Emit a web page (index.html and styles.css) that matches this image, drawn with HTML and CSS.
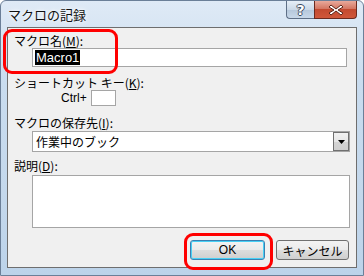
FILE: index.html
```html
<!DOCTYPE html>
<html lang="ja">
<head>
  <meta charset="UTF-8">
  <title>マクロの記録</title>
  <link rel="stylesheet" href="styles.css">
</head>
<body>
  <div class="window">
    <div class="titlebar">
      <span class="title">マクロの記録</span>
      <div class="caption-buttons">
        <div class="cap-btn help-btn">?</div>
        <div class="cap-btn close-btn">
          <svg width="16" height="12" viewBox="0 0 16 12">
            <path d="M3 1 L8 5 L13 1 L15 3 L10 6 L15 9 L13 11 L8 7 L3 11 L1 9 L6 6 L1 3 Z" fill="#fff" stroke="#5a2418" stroke-width="1" stroke-linejoin="round"/>
          </svg>
        </div>
      </div>
    </div>

    <div class="client">
      <div class="label first">マクロ名(<u>M</u>):</div>
      <div class="field text-field"><span class="selected">Macro1</span></div>

      <div class="label gap-9">ショートカット キー(<u>K</u>):</div>
      <div class="shortcut-row">
        <span class="ctrl-label">Ctrl+</span>
        <div class="key-box"></div>
      </div>

      <div class="label gap-10">マクロの保存先(<u>I</u>):</div>
      <div class="field select-field">
        <span class="select-text">作業中のブック</span>
        <div class="drop-btn">
          <svg width="7" height="4" viewBox="0 0 7 4"><path d="M0 0 H7 L3.5 4 Z" fill="#000"/></svg>
        </div>
      </div>

      <div class="label gap-7">説明(<u>D</u>):</div>
      <div class="field text-area"></div>

      <div class="buttons">
        <div class="btn ok-btn">OK</div>
        <div class="btn">キャンセル</div>
      </div>

      <div class="highlight hl-name"></div>
      <div class="highlight hl-ok"></div>
    </div>
  </div>
</body>
</html>
```

FILE: styles.css
```css
* {
  margin: 0;
  padding: 0;
  box-sizing: border-box;
}

body {
  width: 364px;
  height: 276px;
  overflow: hidden;
  font-family: "Noto Sans CJK JP", "DejaVu Sans", sans-serif;
  font-size: 12px;
  color: #000;
  background: #fff;
}

.window {
  width: 364px;
  height: 276px;
  background: linear-gradient(180deg, #dfeaf6 0%, #c9dcef 30%, #c4d8ec 70%, #bcd3ea 100%);
  border: 1px solid #6b7f98;
  border-radius: 6px 6px 0 0;
  display: flex;
  flex-direction: column;
  position: relative;
}

.titlebar {
  height: 26px;
  display: flex;
  align-items: flex-start;
  justify-content: space-between;
  padding-left: 7px;
}

.title {
  font-size: 13px;
  line-height: 13px;
  margin-top: 7px;
  color: #111;
  text-shadow: 0 0 6px #fff, 0 0 3px #fff;
}

.caption-buttons {
  display: flex;
  margin-right: 6px;
}

.cap-btn {
  height: 18px;
  border: 1px solid #5e6f86;
  border-top: none;
  display: flex;
  align-items: center;
  justify-content: center;
}

.help-btn {
  width: 28px;
  border-radius: 0 0 0 4px;
  border-right: none;
  background: linear-gradient(180deg, #e6eef7 0%, #cbd9e8 50%, #b5c7db 51%, #c8d8e9 100%);
  color: #fff;
  font-family: "DejaVu Sans", sans-serif;
  font-weight: bold;
  font-size: 14px;
  text-shadow: 1px 0 0 #3b4a5e, -1px 0 0 #3b4a5e, 0 1px 0 #3b4a5e, 0 -1px 0 #3b4a5e;
}

.close-btn {
  width: 43px;
  border-radius: 0 0 4px 0;
  border-color: #6b2a1f;
  background: linear-gradient(180deg, #e9a99b 0%, #d47763 45%, #c34a30 50%, #d0573a 100%);
}

.client {
  margin: 0 6px;
  height: 241px;
  background: #f0f0f0;
  border: 1px solid #6e6e6e;
  padding: 6px 6px 0 6px;
  display: flex;
  flex-direction: column;
  position: relative;
}

.label {
  line-height: 14px;
  height: 14px;
  white-space: nowrap;
}

.label u {
  text-underline-offset: 1px;
}

.gap-9 { margin-top: 9px; }
.gap-10 { margin-top: 10px; }
.gap-7 { margin-top: 7px; }

.field {
  margin-left: 18px;
  background: #fff;
  border: 1px solid #a5a5a5;
}

.text-field {
  width: 315px;
  height: 19px;
  display: flex;
  align-items: center;
  padding-left: 2px;
}

.selected {
  background: #000;
  color: #fff;
  font-family: "Liberation Sans", sans-serif;
  font-size: 13px;
  line-height: 15px;
  padding: 0 1px;
}

.shortcut-row {
  display: flex;
  align-items: center;
  margin-left: 47px;
  gap: 4px;
}

.ctrl-label {
  font-family: "Liberation Sans", sans-serif;
  font-size: 12px;
}

.key-box {
  width: 25px;
  height: 16px;
  background: #fff;
  border: 1px solid #a5a5a5;
}

.select-field {
  width: 318px;
  height: 21px;
  display: flex;
  align-items: center;
  justify-content: space-between;
  margin-top: 1px;
}

.select-text {
  padding-left: 3px;
  font-size: 12px;
}

.drop-btn {
  width: 16px;
  height: 19px;
  border: 1px solid #707070;
  background: linear-gradient(180deg, #f2f2f2 0%, #e6e6e6 50%, #d4d4d4 51%, #cfcfcf 100%);
  display: flex;
  align-items: center;
  justify-content: center;
}

.text-area {
  width: 318px;
  height: 53px;
  margin-top: 2px;
}

.buttons {
  display: flex;
  justify-content: flex-end;
  gap: 11px;
  margin-top: 12px;
  margin-right: 1px;
}

.btn {
  height: 20px;
  width: 73px;
  border: 1px solid #707070;
  border-radius: 3px;
  background: linear-gradient(180deg, #f3f3f3 0%, #ebebeb 50%, #dddddd 51%, #cfcfcf 100%);
  display: flex;
  align-items: center;
  justify-content: center;
  font-size: 12px;
}

.ok-btn {
  width: 75px;
  border-color: #3c7fb1;
  box-shadow: inset 0 0 0 1px #48d0f5;
  font-family: "Liberation Sans", sans-serif;
}

.highlight {
  position: absolute;
  border: 3px solid #ff0000;
  border-radius: 9px;
}

.hl-name {
  left: -5px;
  top: 1px;
  width: 115px;
  height: 45px;
}

.hl-ok {
  left: 176px;
  top: 205px;
  width: 89px;
  height: 37px;
}
```
